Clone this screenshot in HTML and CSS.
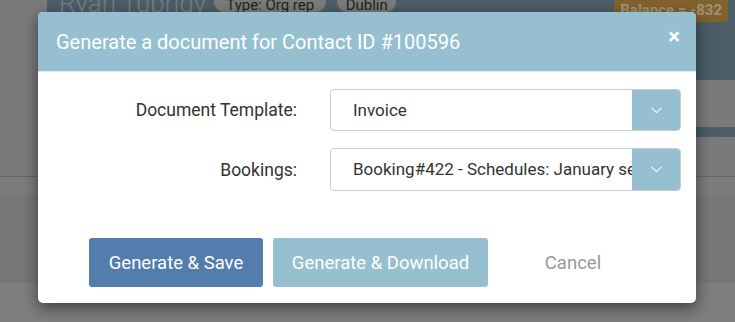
FILE: index.html
```html
<!DOCTYPE html>
<html>
<head>
  <meta charset="utf8" />
  <meta name="viewport" content="width=device-width, initial-scale=1" >
  <title>Generate document</title>
  <link rel="stylesheet" href="styles.css">
</head>
<body>
  <div class="page">
    <div class="topbar">
      <span class="name">Ryan Tubridy</span>
      <span class="pill">Type: Org rep</span>
      <span class="pill">Dublin</span>
      <span class="balance">Balance = -832</span>
    </div>
    <div class="gap1"></div>
    <div class="strip"></div>
    <div class="gap2"></div>
    <div class="rowline"></div>
    <div class="band"></div>
    <div class="foot"></div>
  </div>

  <div class="modal">
    <div class="modal__header">
      <span class="modal__title">Generate a document for Contact ID #100596</span>
      <span class="modal__close">&times;</span>
    </div>
    <div class="modal__body">
      <label class="field__label">Document Template:</label>
      <div class="select">
        <span class="select__text">Invoice</span>
        <span class="select__btn">
          <svg width="11" height="7" viewBox="0 0 11 7"><polyline points="0.5,0.8 5.5,5.6 10.5,0.8" fill="none" stroke="#fff" stroke-width="1.1"/></svg>
        </span>
      </div>
      <label class="field__label">Bookings:</label>
      <div class="select">
        <span class="select__text">Booking#422 - Schedules: January session</span>
        <span class="select__btn">
          <svg width="11" height="7" viewBox="0 0 11 7"><polyline points="0.5,0.8 5.5,5.6 10.5,0.8" fill="none" stroke="#fff" stroke-width="1.1"/></svg>
        </span>
      </div>
    </div>
    <div class="modal__footer">
      <button class="btn btn--save">Generate &amp; Save</button>
      <button class="btn btn--download">Generate &amp; Download</button>
      <button class="btn btn--cancel">Cancel</button>
    </div>
  </div>
</body>
</html>
```

FILE: styles.css
```css
body{
  margin: 0;
  background: #7a7a7a;
  font-family: Roboto, "Liberation Sans", sans-serif;
  overflow: hidden;
}

/* dimmed page behind the dialog */
.page{
  height: 322px;
}
.topbar{
  margin-left: 47px;
  height: 80px;
  background: #4b5d66;
  display: flex;
  align-items: flex-start;
}
.name{
  margin-top: -14px;
  margin-left: 12px;
  font-size: 26px;
  font-weight: 300;
  color: #6f8189;
  line-height: 34px;
}
.pill{
  margin-top: -8px;
  margin-left: 8px;
  height: 20px;
  width: 112px;
  text-align: center;
  border-radius: 10px;
  background: #7b7b7b;
  color: #222;
  font-size: 15px;
  line-height: 26px;
}
.pill + .pill{
  margin-left: 11px;
  width: 59px;
}
.balance{
  margin-left: auto;
  margin-right: 7px;
  height: 22px;
  padding: 0 6px;
  border-radius: 0 0 3px 3px;
  background: #82622c;
  color: #a3927a;
  font-size: 15px;
  font-weight: bold;
  line-height: 20px;
}
.gap1{
  height: 47px;
}
.strip{
  margin-left: 47px;
  height: 10px;
  background: #4b5d66;
}
.gap2{
  height: 39px;
}
.rowline{
  height: 1px;
  background: #666;
}
.band{
  height: 87px;
  border-top: 19px solid #7c7c7c;
  background: #777;
}
.foot{
  height: 39px;
  background: #7e7e7e;
}

/* dialog */
.modal{
  position: absolute;
  left: 38px;
  top: 12px;
  width: 658px;
  height: 291px;
  background: #fff;
  border-radius: 5px;
  box-shadow: 0 5px 15px rgba(0,0,0,0.5);
  overflow: hidden;
}
.modal__header{
  height: 59px;
  background: #96bfcf;
  border-bottom: 1px solid #dce9ee;
  display: flex;
  align-items: center;
  padding: 0 16px 0 18px;
  color: #fff;
}
.modal__title{
  font-size: 20px;
  flex: 1;
  padding-top: 1px;
}
.modal__close{
  font-size: 22px;
  font-weight: bold;
  line-height: 20px;
  margin-top: -9px;
}
.modal__body{
  display: grid;
  grid-template-columns: 259px 351px;
  column-gap: 33px;
  row-gap: 17px;
  padding-top: 17px;
  align-items: center;
}
.field__label{
  text-align: right;
  font-size: 17.5px;
  color: #333;
}
.select{
  height: 40px;
  border: 1px solid #ccc;
  border-radius: 4px;
  display: flex;
  overflow: hidden;
}
.select + .field__label + .select{
  height: 41px;
}
.select__text{
  flex: 1;
  padding-left: 22px;
  font-size: 17px;
  color: #333;
  line-height: 40px;
  white-space: nowrap;
  overflow: hidden;
}
.select__btn{
  width: 48px;
  background: #96bfcf;
  display: flex;
  align-items: center;
  justify-content: center;
}
.modal__footer{
  display: flex;
  padding: 47px 0 0 51px;
}
.btn{
  height: 49px;
  border: none;
  border-radius: 3px;
  font-family: Roboto, "Liberation Sans", sans-serif;
  font-size: 18.5px;
  color: #fff;
  padding: 0;
}
.btn--save{
  width: 174px;
  background: #527dac;
}
.btn--download{
  width: 215px;
  margin-left: 10px;
  background: #96bfcf;
}
.btn--cancel{
  width: 120px;
  margin-left: 25px;
  background: none;
  color: #999;
}
```
